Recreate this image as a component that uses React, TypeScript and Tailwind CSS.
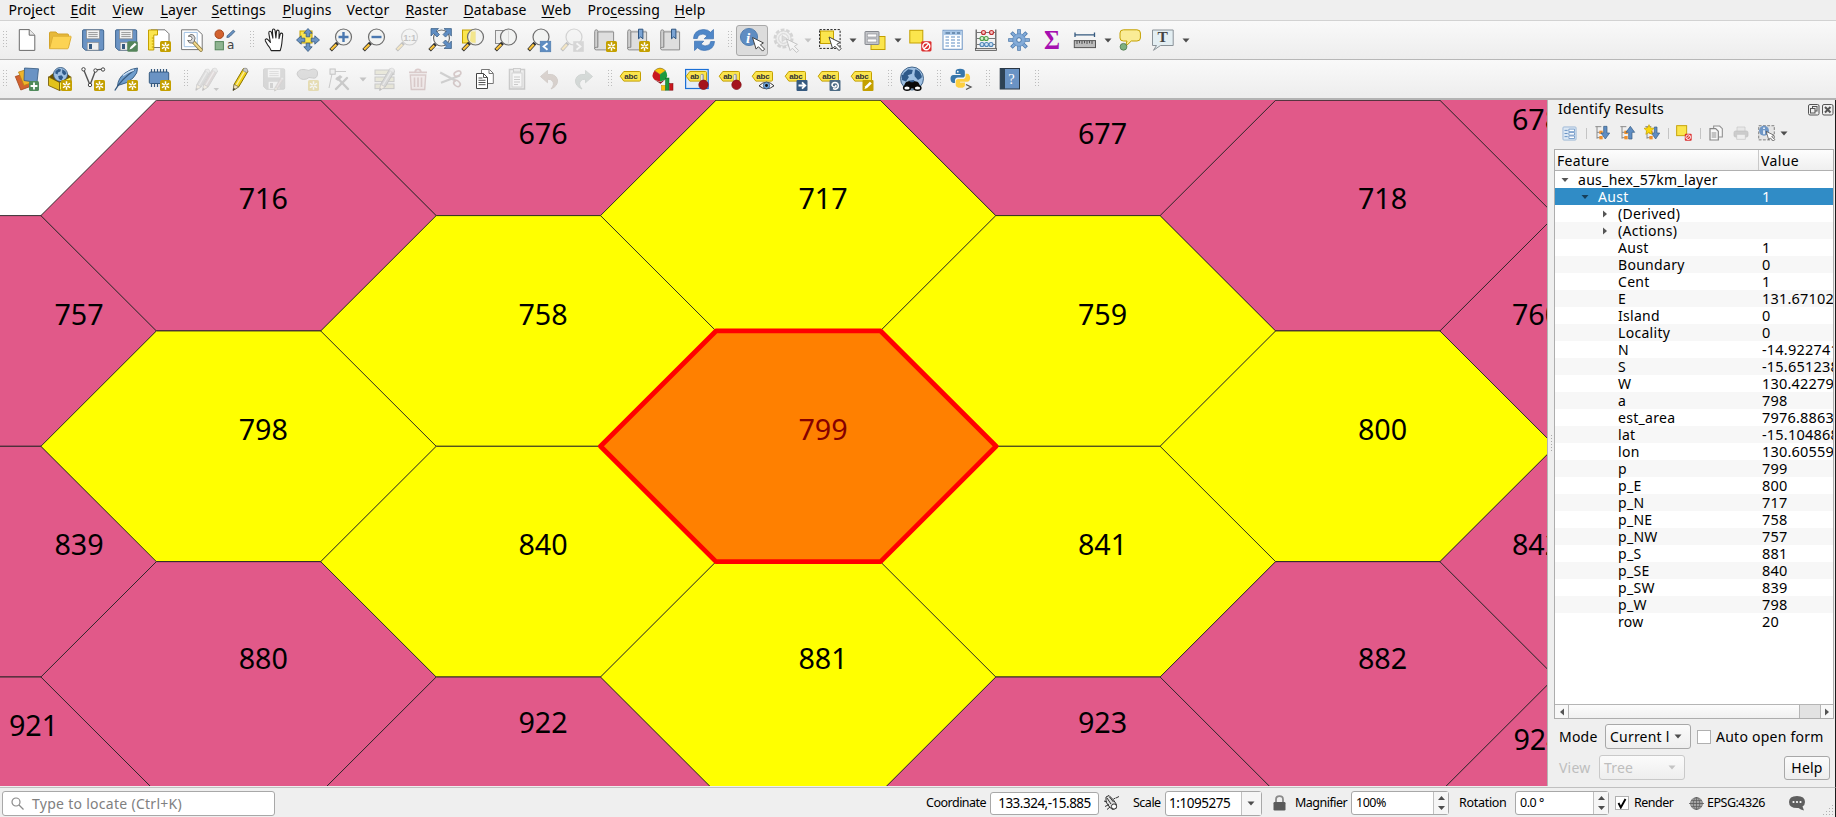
import type { ReactNode } from "react";

/* ---------- icon helpers ---------- */

function Svg({ s = 24, dim = false, children }: { s?: number; dim?: boolean; children: ReactNode }) {
  return (
    <svg width={s} height={s} viewBox="0 0 24 24" className={dim ? "flex-none overflow-visible opacity-25" : "flex-none overflow-visible"} fill="none">
      {children}
    </svg>
  );
}

const Star = () => (
  <g>
    <rect x="13" y="13" width="11" height="11" rx="1.6" fill="#c4a000" />
    <path d="M18.5 14.3v8.4M14.9 16.4l7.2 4.2M22.1 16.4l-7.2 4.2" stroke="#fff" strokeWidth="1.5" />
    <circle cx="18.5" cy="18.5" r="1.1" fill="#c4a000" />
  </g>
);

const Lens = ({ cx = 14.5, cy = 9 }: { cx?: number; cy?: number }) => (
  <g>
    <path d={`M${cx - 6} ${cy + 6}L1.6 22.2`} stroke="#2e2e2e" strokeWidth="3.6" />
    <path d={`M${cx - 7.2} ${cy + 7.4}L2.2 21.6`} stroke="#fcc53c" strokeWidth="2.2" />
    <circle cx={cx} cy={cy} r="8" fill="#f1f3f1" fillOpacity="0.88" stroke="#6e6e6e" strokeWidth="1.2" />
  </g>
);

const Cursor = ({ x = 12, y = 10 }: { x?: number; y?: number }) => (
  <path transform={`translate(${x} ${y})`} d="M0 0l3.6 11.6 2.3-2.4 4.2 4.4 2-2-4.2-4.3 3-1.9z" fill="#fff" stroke="#444" strokeWidth="1" strokeLinejoin="round" />
);

const Pencil = ({ fill = "#f2d21b", dark = "#8a7300" }: { fill?: string; dark?: string }) => (
  <g>
    <path d="M5.2 17.2L14.4 1.6l4.6 2.6-9.3 15.7-5.4 3.4z" fill={fill} stroke={dark} strokeWidth="1" />
    <path d="M7.4 18.2l9-15.4" stroke="#fff" strokeOpacity="0.6" strokeWidth="1.3" />
    <path d="M13.6 3.2l4.3 2.6 1-1.8-1-2.5-2.4-.4z" fill="#c9c9c9" stroke="#777" strokeWidth=".6" />
    <path d="M5.2 17.4l4.4 2.5-5.6 3.6z" fill="#f4e3c0" stroke="#555" strokeWidth=".6" />
    <path d="M4.8 21l1.4.9-2.3 1.6z" fill="#222" />
  </g>
);

const Floppy = ({ grey = false }: { grey?: boolean }) => (
  <g>
    <path d="M2.5 1.8h19q1.2 0 1.2 1.2v18q0 1.2-1.2 1.2H4.5l-2.9-2.6V3q0-1.2.9-1.2z" fill={grey ? "#8a8a8a" : "#6a93c4"} stroke={grey ? "#777" : "#3f658f"} />
    <rect x="5.5" y="2" width="13" height="8.8" fill="#f3f3f3" stroke="#888" strokeWidth=".7" />
    <path d="M7.3 4.6h9.4M7.3 6.6h9.4M7.3 8.6h9.4" stroke="#8d8d8d" strokeWidth=".9" />
    <rect x="6.2" y="14.5" width="11.6" height="7.6" fill="#eee" stroke="#888" strokeWidth=".6" />
    <rect x="8" y="16" width="3" height="5" fill={grey ? "#777" : "#35597f"} />
  </g>
);

const Tag = ({ t = "abc" }: { t?: string }) => (
  <g>
    <path d="M1.2 9.2L4.8 4.5H20.5q1 0 1 1v7.6q0 1-1 1H4.8z" fill="#fbe54d" stroke="#c4a000" strokeWidth="1" />
    <text x="5.2" y="12" fontSize="8" fontWeight="700" fill="#333" fontFamily="'Liberation Sans', sans-serif" textLength={t.length === 3 ? 13.5 : 9}>{t}</text>
  </g>
);

const Pin = () => (
  <g>
    <path d="M17.2 8.500v7" stroke="#9b9b9b" strokeWidth="3.4" strokeLinecap="round" />
    <path d="M16.8 8.500v7" stroke="#eee" strokeWidth="1.4" strokeLinecap="round" />
    <circle cx="18.5" cy="17.8" r="4.700" fill="#a5141c" stroke="#7c0d14" strokeWidth=".7" />
  </g>
);

const MapSheet = () => (
  <g>
    <path d="M5.2 1.9h15v16.5H6" fill="#e4e4e4" />
    <path d="M1.7 3.6q0-1.8 1.6-1.8t1.6 1.8v16H3.3q-1.6 0-1.6 1.4z" fill="#d0d0d0" stroke="#8d8d8d" />
    <path d="M4.9 3.9h15.7v18H3.2q-1.5 0-1.5-1.3t1.5-1.3h1.7z" fill="#dedede" stroke="#8d8d8d" />
  </g>
);

const Bookmark = ({ x = 12.5 }: { x?: number }) => <path d={`M${x} 1.2h4.4v9.6l-2.2-1.9-2.2 1.9z`} fill="#7ba4d4" stroke="#2f5580" />;

const NoEntry = () => (
  <g>
    <rect x="13.2" y="13.2" width="10.3" height="10.3" rx="1.4" fill="#dc2f2f" />
    <circle cx="18.3" cy="18.3" r="3.5" stroke="#fff" strokeWidth="1.4" />
    <path d="M15.9 20.7l4.9-4.9" stroke="#fff" strokeWidth="1.4" />
  </g>
);

const Globe = ({ cx = 12, cy = 8.5, r = 7.5 }: { cx?: number; cy?: number; r?: number }) => (
  <g>
    <circle cx={cx} cy={cy} r={r} fill="#9fc0e2" stroke="#35597f" strokeWidth=".9" />
    <path transform={`translate(${cx - r} ${cy - r}) scale(${r / 7.5})`} d="M2 4l3-2.5 3 .5-.6 2.4-2.6 1-.4 2.2L2 6.5zM9.4 2l3.4 2 1 3-2.4 1.4L9.2 6zM5 9l3.6-.6 1.8 2-2 3.4-2.6-1.6z" fill="#2f5a8a" />
  </g>
);

/* ---------- toolbar icons: main row ---------- */

const mainIcons: Record<string, ReactNode> = {
  new: <Svg><path d="M4.3 1.6h9.9l5.6 5.6v15.2H4.3z" fill="#fff" stroke="#6a6a6a" /><path d="M14.2 1.6v5.6h5.6" fill="#e9e9e9" stroke="#6a6a6a" /></Svg>,
  open: <Svg><path d="M1.5 20.5V5q0-1 1-1h5.4l2 2h9.6q1 0 1 1v3" fill="#e7b93a" stroke="#d3a32a" /><path d="M1.6 20.7L4.6 9q.2-.8 1-.8h16.8q.9 0 .7.9l-2.7 10.8q-.3.9-1.1.9z" fill="#fcd353" stroke="#dfb036" /></Svg>,
  save: <Svg><Floppy /></Svg>,
  saveas: <Svg><Floppy /><rect x="13.2" y="13.2" width="10.6" height="10.6" rx="1.6" fill="#55855b" /><path d="M15.5 21.6l1-2.6 4.4-4.2 1.6 1.6-4.4 4.2z" fill="#fff" /></Svg>,
  layout: <Svg><path d="M4 1.8h14l4 4v13.7H4z" fill="#fff" stroke="#777" /><path d="M1.5 22V2h9v5H6.8v15z" fill="#fbe54d" stroke="#c4a000" /><path d="M4.8 10h2M4.8 13h2M4.8 16h2M4.8 19h2" stroke="#c4a000" /><Star /></Svg>,
  layoutmgr: <Svg><path d="M1.6 1.8h15.6l5 4.6v15.2H1.6z" fill="#fff" stroke="#777" /><path d="M4.2 4.4h13v14.3h-13z" stroke="#9fc0e2" /><path d="M13.5 14l7.5 8" stroke="#8b7a3c" strokeWidth="3.6" strokeLinecap="round" /><path d="M13.5 14l7.5 8" stroke="#f2d78a" strokeWidth="2" strokeLinecap="round" /><path d="M8.2 8.2l3 .2 1 2-1.6 2.4-3-.4Q9 16 12.4 15l1.8-1.4q2.2-4-.8-6.6-2.4-1.7-5.2 1.2z" fill="#dcdcdc" stroke="#666" strokeWidth=".9" /></Svg>,
  style: <Svg><circle cx="6.3" cy="6.2" r="4.3" fill="#d2622f" stroke="#a3451b" /><path d="M13.8 9.4q.2-2.4 2-3l4.4-4.2 1.7 1.3-4.5 4.6q-1.3 1.7-3.6 1.3z" fill="#6a93c4" stroke="#35597f" strokeWidth=".8" /><rect x="2.2" y="13.6" width="8.2" height="8.2" fill="#8fb491" stroke="#55855b" /><text x="14" y="21" fontSize="12" fill="#444" fontFamily="'DejaVu Sans', sans-serif">a</text></Svg>,
  hand: <Svg><path d="M8.2 22.6q-1-3-3.6-5.8L2.4 13q-.6-1.5.6-2 1.2-.4 2.4 1.2l2 2.3L5.8 5.1q-.1-1.6 1.1-1.8 1.2-.1 1.6 1.3l1.4 5.6-.5-7.4Q9.4 1 10.6 1t1.5 1.6l.8 7.3.6-6.5q.3-1.4 1.4-1.3 1.2.2 1.2 1.7L16 10.600l1.200-4.500q.5-1.200 1.500-1 1.100.3 1 1.700l-.9 8.700q-.4 3.600-1.600 7.100z" fill="#fff" stroke="#222" strokeWidth="1.100" strokeLinejoin="round" /></Svg>,
  panto: <Svg><rect x="4" y="3" width="12" height="12" fill="#fbe54d" stroke="#c4a000" /><path d="M12 .5l4.200 4.700h-2.400v3.600h-3.600V5.200H7.800zM12 23.500l-4.200-4.700h2.400v-3.600h3.600v3.600h2.400zM.5 12l4.700-4.200v2.400h3.600v3.600H5.200v2.400zM23.500 12l-4.700 4.200v-2.400h-3.600v-3.600h3.600V7.800z" fill="#6a93c4" stroke="#35597f" strokeWidth=".8" /></Svg>,
  zoomin: <Svg><Lens /><path d="M14.500 4v10M9.500 9h10" stroke="#4a78b0" strokeWidth="2.400" /></Svg>,
  zoomout: <Svg><Lens /><path d="M9.500 9h10" stroke="#4a78b0" strokeWidth="2.400" /></Svg>,
  native: <Svg dim><Lens /><text x="8.200" y="12.500" fontSize="9.500" fontWeight="700" fill="#333" textLength="13" fontFamily="'Liberation Sans', sans-serif">1:1</text></Svg>,
  full: <Svg><rect x="3" y="1" width="20" height="19" fill="#fff" stroke="#c9d6e4" strokeWidth=".5" /><Lens cx={13.500} cy={10} /><path d="M3 .6h7.500L8 3l3.500 3.500-2.500 2.500-3.400-3.500L3 8zM23.400.6v7.500L21 5.600l-3.500 3.500L15 6.500 18.500 3 16 .6zM23.400 20.500H16l2.500-2.400-3.500-3.600 2.500-2.500 3.500 3.500 2.400-2.400z" fill="#5f8dc2" stroke="#35597f" strokeWidth=".7" /></Svg>,
  zoomsel: <Svg><rect x="1.500" y="2" width="13" height="13" fill="#fbe54d" stroke="#c4a000" /><Lens /><path d="M10 3.500h4.500v11.300q-3 .4-5.500-1.800z" fill="#f3e68c" /></Svg>,
  zoomlayer: <Svg><rect x="1.500" y="2.500" width="13" height="13" fill="#eee" stroke="#8d8d8d" /><Lens /><path d="M14.500 3v12" stroke="#d8d8d8" /></Svg>,
  zoomlast: <Svg><Lens cx={14} /><rect x="13.200" y="13.200" width="10.600" height="10.600" fill="#5f8dc2" stroke="#4b78ab" strokeWidth=".6" /><path d="M20.500 15.200l-4 3.300 4 3.300" stroke="#fff" strokeWidth="1.800" /></Svg>,
  zoomnext: <Svg dim><Lens cx={14} /><rect x="13.200" y="13.200" width="10.600" height="10.600" fill="#888" /><path d="M16.500 15.200l4 3.300-4 3.300" stroke="#fff" strokeWidth="1.800" /></Svg>,
  newmap: <Svg><MapSheet /><Star /></Svg>,
  newbm: <Svg><MapSheet /><Bookmark /><Star /></Svg>,
  bm: <Svg><MapSheet /><Bookmark /></Svg>,
  refresh: <Svg><path d="M1.500 10.500Q2 2 11.500 1.500q4.500 0 7 2.700l3-2.700v9.300h-9.300l3-3Q11 4.600 7.300 7q-1.500 1.200-2 3.500z" fill="#4f87c8" stroke="#3a6fb0" strokeWidth=".7" /><path d="M22.500 13.500Q22 22 12.500 22.500q-4.500 0-7-2.700l-3 2.700v-9.300h9.300l-3 3q4.200 3.200 7.900.8 1.500-1.200 2-3.500z" fill="#4f87c8" stroke="#3a6fb0" strokeWidth=".7" /></Svg>,
  identify: <Svg><circle cx="9" cy="9" r="8.600" fill="#5f8dc2" stroke="#4473a8" strokeWidth=".8" /><text x="6" y="14.500" fontSize="15" fontStyle="italic" fontWeight="700" fill="#fff" fontFamily="'Liberation Serif', serif">i</text><Cursor x={12.500} y={9.500} /></Svg>,
  action: <Svg dim><circle cx="10.500" cy="10.500" r="8.500" stroke="#777" strokeWidth="3" strokeDasharray="3.600 1.700" /><circle cx="10.500" cy="10.500" r="7.600" fill="#ddd" stroke="#777" /><circle cx="10.500" cy="10.500" r="4.800" fill="#eee" stroke="#777" /><path d="M9 7.500l5 3-5 3z" fill="#999" stroke="#555" strokeWidth=".6" /><Cursor x={13.500} y={11} /></Svg>,
  select: <Svg><rect x="1.600" y="1.600" width="20.500" height="18.800" stroke="#222" strokeWidth="1" strokeDasharray="2.200 1.400" /><rect x="2.500" y="3" width="13" height="12.500" fill="#fbe54d" stroke="#c4a000" /><Cursor x={11} y={9} /></Svg>,
  selectform: <Svg><rect x="8" y="8.500" width="14" height="13" fill="#fbe54d" stroke="#c4a000" /><rect x="2" y="3.500" width="14" height="13" rx=".5" fill="#c4c6ca" stroke="#85888e" /><rect x="4.200" y="6" width="9.600" height="3" fill="#fff" stroke="#85888e" strokeWidth=".6" /><rect x="4.200" y="11" width="9.600" height="3" fill="#fff" stroke="#85888e" strokeWidth=".6" /></Svg>,
  deselect: <Svg><rect x="1.800" y="2.300" width="13" height="12.700" fill="#fbe54d" stroke="#c4a000" /><NoEntry /></Svg>,
  table: <Svg><rect x="2" y="2.300" width="19.200" height="19" fill="#fff" stroke="#6a93c4" /><rect x="2.500" y="2.800" width="18.200" height="4.300" fill="#a8c6e6" /><path d="M4.500 5h4.500M11 5h3M16 5h3" stroke="#35597f" /><path d="M4.500 9h3.500M10 9h4M16 9h3M4.500 12h3.500M10 12h4M16 12h3M4.500 15h3.500M10 15h4M16 15h3M4.500 18h3.500M10 18h4M16 18h3" stroke="#5f8dc2" /></Svg>,
  abacus: <Svg><path d="M2.200 1.500V21M21.800 1.500V21" stroke="#555" strokeWidth="1.200" /><path d="M2.200 4.500h19.600M2.200 10.500h19.600M2.200 16.500h19.600" stroke="#777" /><rect x="1.500" y="20.500" width="21" height="2" fill="#ddd" stroke="#555" strokeWidth=".8" /><g strokeWidth="1.100"><g fill="#f6c3c3" stroke="#c03030"><circle cx="9.500" cy="4.500" r="2" /><circle cx="17.500" cy="4.500" r="2" /></g><g fill="#d5f0cf" stroke="#4fa04a"><circle cx="8" cy="10.500" r="2" /><circle cx="12.200" cy="10.500" r="2" /></g><g fill="#cfe2f5" stroke="#4f86b8"><circle cx="8" cy="16.500" r="2" /><circle cx="12.500" cy="16.500" r="2" /><circle cx="17" cy="16.500" r="2" /></g></g></Svg>,
  gear: <Svg><path d="M12 1.200v21.600M1.200 12h21.600M4.400 4.400l15.200 15.200M19.600 4.400L4.400 19.600" stroke="#4b78ab" strokeWidth="3.600" /><path d="M12 2v20M2 12h20M5 5l14 14M19 5L5 19" stroke="#83abd8" strokeWidth="2.200" /><circle cx="12" cy="12" r="6.300" fill="#83abd8" stroke="#5b89bd" strokeWidth=".7" /><circle cx="12" cy="12" r="2.300" fill="#f5f5f5" stroke="#4b78ab" /></Svg>,
  sigma: <Svg><text x="4" y="21.300" fontSize="27" fontWeight="700" fill="#a60fb0" textLength="16" lengthAdjust="spacingAndGlyphs" fontFamily="'Liberation Serif', serif">Σ</text></Svg>,
  measure: <Svg><path d="M2 6.800h19.500M2 4.600V9M21.500 4.600V9" stroke="#35597f" strokeWidth="1.300" /><rect x="1.300" y="12.600" width="21.200" height="7" fill="#bcbcbc" stroke="#555" /><path d="M4 13v3M6.500 13v2.300M9 13v3M11.500 13v2.300M14 13v3M16.500 13v2.300M19 13v3" stroke="#444" strokeWidth=".9" /></Svg>,
  tip: <Svg><path d="M5.500 1.800h13.400q3.500 0 3.500 3.200v5q0 3-3.500 3h-5.600L7.500 18.500 9 13H5.500Q2 13 2 10V5q0-3.200 3.500-3.200z" fill="#faec96" stroke="#c4a000" /><circle cx="5.500" cy="18.800" r="3.400" fill="#7fb07f" stroke="#4b734b" strokeWidth=".8" /></Svg>,
  textann: <Svg><path d="M1.500 2h20.700v15.500H9.500L2.500 22.300l3-4.800h-4z" fill="#e3eef2" stroke="#8a9298" /><text x="6.600" y="14.200" fontSize="15.500" fontWeight="700" fill="#444" fontFamily="'Liberation Serif', serif">T</text></Svg>,
};

/* ---------- toolbar icons: data source / digitising row ---------- */

const Layers = () => (
  <g>
    <path d="M.3 9.500l10-3 5 13-9.500 3.500z" fill="#d2622f" stroke="#a3451b" strokeWidth=".8" />
    <path d="M3.500 5l10-3 5 13-9.500 3.500z" fill="#f0b429" stroke="#b98314" strokeWidth=".8" />
    <path d="M9.500 1l14 .8-1.500 13.700-13-2z" fill="#6a93c4" stroke="#35597f" strokeWidth=".8" />
  </g>
);

const editIcons: Record<string, ReactNode> = {
  addlayer: <Svg><Layers /><rect x="14" y="14" width="10" height="10" rx="1.500" fill="#4f8a5b" /><path d="M19 15.600v6.800M15.600 19h6.800" stroke="#fff" strokeWidth="1.800" /></Svg>,
  geopkg: <Svg><path d="M.5 10l11 6 11.500-6-5-4.500h-12z" fill="#6b5200" /><Globe cx={12.500} cy={7.500} r={7} /><path d="M.5 9.800l11 5.700v8L.5 18.500z" fill="#e2c21a" stroke="#6b5200" strokeWidth=".8" /><path d="M11.500 15.500L23 9.800v8.700l-11.500 5z" fill="#fdf250" stroke="#6b5200" strokeWidth=".8" /><Star /></Svg>,
  vlayer: <Svg><path d="M2.500 2.300L9 18 14.500 3.500q3.500-1.600 7-1" stroke="#555" strokeWidth="1.400" /><g fill="#fff" stroke="#444"><circle cx="2.500" cy="2.300" r="1.700" /><circle cx="9" cy="18" r="1.700" /><circle cx="14.500" cy="3.500" r="1.700" /><circle cx="22" cy="2.500" r="1.700" /></g><Star /></Svg>,
  feather: <Svg><path d="M3.500 19Q4 11 11 6q6-4.500 12.500-5 .5 5-4.500 10-5.500 5.500-13.500 7z" fill="#6f9dcc" stroke="#35597f" strokeWidth=".9" /><path d="M.8 23.500Q7 12.500 20.500 3" stroke="#35597f" strokeWidth="1.300" /><path d="M9 8.500q5-4 11-5.500" stroke="#cfe2f5" strokeWidth="1.500" /><Star /></Svg>,
  chip: <Svg><path d="M4.500 2v18M7.500 2v18M10.500 2v18M13.500 2v18M16.500 2v18M19.500 2v18" stroke="#35597f" strokeWidth="1.200" /><rect x="2.300" y="5" width="19.400" height="11.500" rx="1.200" fill="#6a93c4" stroke="#35597f" /><Star /></Svg>,
  edits: <Svg dim><g transform="translate(-4 1) scale(.95)"><Pencil fill="#999" dark="#777" /></g><g transform="translate(2.500 0)"><Pencil fill="#a08888" dark="#777" /></g><path d="M17.500 21h5.500l-2.700 3z" fill="#555" /></Svg>,
  pencil: <Svg><Pencil /></Svg>,
  savee: <Svg dim><Floppy grey /><g transform="translate(10 9.500) scale(.62)"><Pencil fill="#a08888" dark="#777" /></g></Svg>,
  poly: <Svg dim><path d="M2 7q1-5 7-4.500 5 2 9-.5 5 0 4.500 5t-5 4q-4-1.500-6 1-7 2-9.500-5z" fill="#999" stroke="#555" /><Star /></Svg>,
  vertex: <Svg dim><path d="M4.500 4.500L1 21M4.500 4.500H18" stroke="#555" /><rect x="2" y="2" width="5.200" height="5.200" fill="#ddd" stroke="#333" /><path d="M8 22l11-11M9.500 11L20 22" stroke="#555" strokeWidth="2.400" strokeLinecap="round" /><path d="M7 12l5-4 2.500 2-4.500 4z" fill="#555" /></Svg>,
  multi: <Svg dim><g fill="#c9c490" stroke="#555"><rect x="2" y="3" width="19" height="4.600" /><rect x="2" y="10" width="19" height="4.600" /><rect x="2" y="17" width="19" height="4.600" /></g><g transform="translate(2.500 0)"><Pencil fill="#888" dark="#444" /></g></Svg>,
  trash: <Svg dim><path d="M4.300 8h15.400l-1 14.500H5.300z" fill="#e8cfcf" stroke="#8d5252" strokeWidth="1.400" /><path d="M8.500 10.500v9.500M12 10.500v9.500M15.500 10.500v9.500" stroke="#8d5252" strokeWidth="1.600" /><path d="M3 5.300h18M9 5q.5-2.700 3-2.700T15 5" stroke="#8d5252" strokeWidth="1.800" /></Svg>,
  cut: <Svg dim><path d="M1.200 5.500l16 8.500M2 15.800L21 8.500" stroke="#666" strokeWidth="2" /><ellipse cx="18.500" cy="6.600" rx="3.600" ry="2.300" stroke="#7a4a4a" strokeWidth="1.600" transform="rotate(-25 18.500 6.600)" /><ellipse cx="18" cy="16.500" rx="3.600" ry="2.600" stroke="#7a4a4a" strokeWidth="1.600" transform="rotate(40 18 16.500)" /></Svg>,
  copy: <Svg><path d="M9.500 2.500h8l3.800 3.800V16.500H9.500z" fill="#fff" stroke="#777" /><path d="M17 2.500v4h4" stroke="#777" /><path d="M4.500 6.500h7l4 4V21.500h-11z" fill="#fff" stroke="#444" /><path d="M11.500 6.500v4h4M6.500 11h4M6.500 13.300h7M6.500 15.500h7M6.500 17.700h7" stroke="#555" /></Svg>,
  paste: <Svg dim><rect x="4.500" y="2.500" width="15" height="19.500" fill="#ddd" stroke="#555" strokeWidth="1.500" /><rect x="7" y="6" width="10" height="14" fill="#fff" stroke="#777" /><rect x="8.500" y="1.500" width="7" height="3.500" fill="#ccc" stroke="#555" /><path d="M9 10h6M9 12.500h6M9 15h6M9 17.500h4" stroke="#555" /></Svg>,
  undo: <Svg dim><path d="M2.500 9.500L9.500 3.500v4Q18 6.500 19.500 13q.5 6-6.500 9 4-4.500 1.500-8Q13 12 9.500 12.200v3.500z" fill="#8a7060" stroke="#7a6455" /></Svg>,
  redo: <Svg dim><path d="M21.500 9.500L14.500 3.500v4Q6 6.500 4.500 13 4 19 11 22q-4-4.500-1.500-8 1.500-2 5-1.800v3.500z" fill="#7b8f88" stroke="#6d7c76" /></Svg>,
  label: <Svg><Tag /></Svg>,
  pie: <Svg><path d="M8 7.500L2.500 3.700Q8-1.500 13.500 3.700z" fill="#fbc50a" stroke="#5a4a00" strokeWidth=".5" /><path d="M8 7.500L2.500 3.700q-4 5 0 9l5.500 2z" fill="#c8171d" /><path d="M8 7.500l5.500-3.800q3.500 5-.5 9L8 14.700z" fill="#1e9a3e" /><path d="M2.500 12.700l5.500 2.500 5-2.500-4.500 4z" fill="#7d0b10" /><rect x="9.500" y="18.500" width="3.800" height="4.700" fill="#fbc50a" stroke="#b58a00" strokeWidth=".5" /><rect x="13.500" y="11" width="3.500" height="12.200" fill="#1e9a3e" stroke="#0c5f22" strokeWidth=".5" /><rect x="17.500" y="16.500" width="3.500" height="6.700" fill="#c8171d" stroke="#7d0b10" strokeWidth=".5" /></Svg>,
  pinbox: <Svg><rect x=".6" y="2.500" width="22.600" height="19" fill="#e3ecf6" stroke="#1a6fd6" strokeWidth="1.200" /><Tag t="ab" /><Pin /></Svg>,
  pin: <Svg><Tag t="ab" /><Pin /></Svg>,
  eye: <Svg><Tag /><path d="M8 18.800Q15.500 11.500 23 18.800q-7.500 6-15 0z" fill="#fff" stroke="#333" /><circle cx="15.500" cy="18.500" r="3.300" fill="#6fa3d8" stroke="#35597f" strokeWidth=".7" /><circle cx="15.500" cy="18.500" r="1.400" fill="#111" /></Svg>,
  move: <Svg><Tag /><rect x="12.500" y="13" width="11" height="11" rx="1" fill="#35597f" /><path d="M14.500 18.500h6M18 15.300l3.300 3.200-3.300 3.200" stroke="#fff" strokeWidth="1.800" /></Svg>,
  rotate: <Svg><Tag /><rect x="12.500" y="13" width="11" height="11" rx="1" fill="#4d6b85" /><path d="M16 21.500l2 .8q3.500-.8 3.300-3.800-.3-3-3.300-3t-3 2.800q.8 2 2.800 1.600t.6-2" stroke="#fff" strokeWidth="1.500" /></Svg>,
  change: <Svg><Tag /><rect x="12.500" y="13" width="11" height="11" rx="1" fill="#c4a000" /><path d="M14.500 22l.8-2.800 4.600-4.500 1.900 1.900-4.600 4.500z" fill="#fff" /></Svg>,
  meta: <Svg><Globe cx={12} cy={11.500} r={11.500} /><path d="M15.500 2l4 2.500 2.500 5-3.500 1.500-4-3zM1.500 8l4.500-1 3 3-3 4.500-4-1.500z" fill="#2f5a8a" /><path d="M4 19.500q1-5 4-5 1.700-1 2.700.8h2.600q1-1.800 2.700-.8 3 0 4 5l1 2H3z" fill="#0a0a0a" /><ellipse cx="7" cy="21" rx="3.400" ry="2.300" fill="#fff" stroke="#0a0a0a" strokeWidth="1.500" /><ellipse cx="17.500" cy="21" rx="3.400" ry="2.300" fill="#fff" stroke="#0a0a0a" strokeWidth="1.500" /></Svg>,
  python: <Svg><g transform="translate(.8 1) scale(.86)"><path d="M12 1C8.300 1 6.800 2.300 6.800 4v3h5.700v1H4.300C2 8 .8 9.800.8 12.500S2.200 17.300 4 17.300h2v-2.800c0-2 1.500-3.400 3.500-3.400h5.200c1.600 0 2.800-1.100 2.800-2.800V4C17.500 2.200 15.500 1 12 1z" fill="#3776ab" /><path transform="rotate(180 12.200 12)" d="M12 1C8.300 1 6.800 2.300 6.800 4v3h5.700v1H4.300C2 8 .8 9.800.8 12.500S2.200 17.300 4 17.300h2v-2.800c0-2 1.500-3.400 3.500-3.400h5.200c1.600 0 2.800-1.100 2.800-2.800V4C17.500 2.200 15.500 1 12 1z" fill="#fdcf40" /><circle cx="9.300" cy="4.300" r="1" fill="#fff" /></g><path d="M17 17.500l5 2.500-5 2.500" stroke="#555" strokeWidth="1.300" /></Svg>,
  help: <Svg><rect x="2.200" y="1.500" width="19.300" height="20.500" fill="#6a93c4" stroke="#2b3744" strokeWidth="1" /><rect x="2.200" y="1.500" width="4.800" height="20.500" fill="#2e4254" /><text x="10.200" y="16.500" fontSize="14.500" fill="#fff" fontFamily="'Liberation Serif', serif">?</text></Svg>,
};

/* ---------- toolbar primitives ---------- */

function Dots({ cls }: { cls: string }) {
  return (
    <div className={`flex flex-none justify-end ${cls}`}>
      <svg width="5" height="18" viewBox="0 0 5 18">
        {[0, 1, 2, 3, 4, 5].map((r) => (
          <g key={r} fill="#bdbdbd">
            <rect x="0" y={r * 3} width="1" height="1" />
            <rect x="3" y={r * 3} width="1" height="1" />
          </g>
        ))}
      </svg>
    </div>
  );
}

function Caret({ dim = false }: { dim?: boolean }) {
  return (
    <div className="flex w-3 flex-none justify-center">
      <svg width="8" height="5" viewBox="0 0 8 5"><path d="M.5.5h7L4 4.500z" fill={dim ? "#c4c4c4" : "#4d4d4d"} /></svg>
    </div>
  );
}

function Tool({ children, on = false }: { children: ReactNode; on?: boolean }) {
  return (
    <div className="flex h-[38px] w-[33px] flex-none items-center justify-center">
      <div className={on ? "flex h-[31px] w-8 items-center justify-center rounded-[3px] border border-[#a9a9a9] bg-[#dcdcdc]" : "flex items-center justify-center"}>{children}</div>
    </div>
  );
}

function Tools({ set, names }: { set: Record<string, ReactNode>; names: string[] }) {
  return <>{names.map((n) => <Tool key={n} on={n === "identify"}>{set[n]}</Tool>)}</>;
}

const menu: [string, string, string, string][] = [
  ["Pro", "j", "ect", "w-[62px]"],
  ["", "E", "dit", "w-[42px]"],
  ["", "V", "iew", "w-[48px]"],
  ["", "L", "ayer", "w-[51px]"],
  ["", "S", "ettings", "w-[71px]"],
  ["", "P", "lugins", "w-[64px]"],
  ["Vect", "o", "r", "w-[59px]"],
  ["", "R", "aster", "w-[58px]"],
  ["", "D", "atabase", "w-[78px]"],
  ["", "W", "eb", "w-[46px]"],
  ["Pro", "c", "essing", "w-[87px]"],
  ["", "H", "elp", "w-[60px]"],
];

/* ---------- map canvas ---------- */

const CX = 798.3, CY = 346.3, DX = 279.8, HH = 115.35, HW = 197.8, TW = 82.3;
const yellow = new Set(["0,-1", "0,0", "0,1", "-2,0", "2,0", "-1,0", "-1,1", "1,0", "1,1"]);

const labels: [string, number, number][] = [
  ["676", 543, 33.500], ["677", 1102.500, 33.500], ["678", 1536.500, 19.300],
  ["716", 263.300, 99], ["717", 823, 99], ["718", 1382.500, 99],
  ["757", 79, 214.300], ["758", 543, 214.300], ["759", 1102.500, 214.300], ["760", 1536.500, 214.300],
  ["798", 263.300, 330], ["800", 1382.500, 330],
  ["839", 79, 445], ["840", 543, 445], ["841", 1102.500, 445], ["842", 1536.500, 445],
  ["880", 263.300, 559], ["881", 823, 559], ["882", 1382.500, 559],
  ["921", 33.500, 625.300], ["922", 543, 622.500], ["923", 1102.500, 622.500], ["924", 1538, 640],
];

function hex(cx: number, cy: number) {
  return `${cx - HW},${cy} ${cx - TW},${cy - HH} ${cx + TW},${cy - HH} ${cx + HW},${cy} ${cx + TW},${cy + HH} ${cx - TW},${cy + HH}`;
}

function MapCanvas() {
  const cells: ReactNode[] = [];
  for (let i = -3; i <= 3; i++) {
    for (let k = -2; k <= 2; k++) {
      if (i === -3 && k < 0) continue;
      if (i === -2 && k < -1) continue;
      const cy = CY + k * 2 * HH - (i % 2 !== 0 ? HH : 0);
      cells.push(<polygon key={`${i},${k}`} points={hex(CX + i * DX, cy)} fill={yellow.has(`${i},${k}`) ? "#ffff00" : "#e15989"} stroke="#232323" strokeWidth="0.9" />);
    }
  }
  return (
    <svg width="1547" height="686" viewBox="0 0 1547 686" className="block bg-white">
      {cells}
      <polygon points={hex(CX, CY)} fill="#ff8000" stroke="#ff0000" strokeWidth="4.800" strokeLinejoin="round" />
      <g fontFamily="'Noto Sans', sans-serif" fontSize="28.700" textAnchor="middle" fill="#000">
        {labels.map(([t, x, y]) => <text key={t} x={x} y={y + 10.300}>{t}</text>)}
        <text x="823" y="340.300" fill="#850000">799</text>
      </g>
    </svg>
  );
}

/* ---------- identify panel ---------- */

const fields: [string, string][] = [
  ["Aust", "1"], ["Boundary", "0"], ["Cent", "1"], ["E", "131.67102"], ["Island", "0"], ["Locality", "0"],
  ["N", "-14.922741"], ["S", "-15.651238"], ["W", "130.42279"], ["a", "798"], ["est_area", "7976.8863"],
  ["lat", "-15.104868"], ["lon", "130.60559"], ["p", "799"], ["p_E", "800"], ["p_N", "717"], ["p_NE", "758"],
  ["p_NW", "757"], ["p_S", "881"], ["p_SE", "840"], ["p_SW", "839"], ["p_W", "798"], ["row", "20"],
];

function Arrow({ open = false, color = "#555" }: { open?: boolean; color?: string }) {
  return <svg width="8" height="8" viewBox="0 0 8 8" className="flex-none"><path d={open ? "M.5 2h7L4 6z" : "M2 .5v7L6 4z"} fill={color} /></svg>;
}

function Row({ pad, name, value = "", cls, arrow }: { pad: string; name: string; value?: string; cls: string; arrow?: ReactNode }) {
  return (
    <div className={`flex h-[17px] items-center ${cls}`}>
      <div className={`flex w-[207px] flex-none items-center tracking-[0.3px] ${pad}`}>
        <div className="flex w-[17px] flex-none items-center">{arrow}</div>
        <span>{name}</span>
      </div>
      <div className="w-[72px] flex-none overflow-hidden whitespace-nowrap text-[14.500px]">{value}</div>
    </div>
  );
}

const Tree = () => (
  <g>
    <path d="M2 2.500h9M4.500 2.500v18M4.500 11h5M4.500 19h5" stroke="#8a8a8a" strokeWidth="1.500" />
    <rect x="8" y="8.500" width="5" height="5" fill="#f0902a" />
    <rect x="8" y="16.500" width="5" height="5" fill="#f0902a" />
  </g>
);

const Sep = ({ cls }: { cls: string }) => (
  <div className={`flex flex-none justify-center ${cls}`}><div className="h-[11px] w-px bg-[#c4c4c4]" /></div>
);

const P = ({ cls = "w-[25px]", children }: { cls?: string; children: ReactNode }) => <div className={`flex flex-none justify-center ${cls}`}>{children}</div>;

function PanelTools() {
  return (
    <div className="flex h-7 items-center">
      <P cls="w-[30px]"><Svg s={15}><rect x="1.500" y="1.500" width="21" height="21" rx="1.500" fill="#dce8f4" stroke="#9cb8d6" strokeWidth="1.500" /><path d="M4 7h5M4 12h5M4 17h5" stroke="#6a93c4" strokeWidth="1.600" /><path d="M11 5h9v4h-9zM11 10.500h9v4h-9zM11 16h9v4h-9z" fill="#fff" stroke="#6a93c4" strokeWidth="1.300" /></Svg></P>
      <Sep cls="w-[5px]" />
      <P><Svg s={16}><Tree /><path d="M14.500 2h5v10h4L17 21l-6.500-9h4z" fill="#5f8dc2" stroke="#35597f" /></Svg></P>
      <P><Svg s={16}><Tree /><path d="M14.500 21h5V11h4L17 2l-6.500 9h4z" fill="#5f8dc2" stroke="#35597f" /></Svg></P>
      <P><Svg s={16}><Tree /><path d="M15.500 3h4v9h4L17.500 21l-6.500-9h4.500z" fill="#5f8dc2" stroke="#35597f" /><path d="M7.500-.5l2.300 4.900 5.200.6-3.800 3.700 1 5.300-4.700-2.600L2.800 14l1-5.300L0 5l5.200-.6z" fill="#fbd70a" stroke="#c4a000" /></Svg></P>
      <Sep cls="w-[9px]" />
      <P cls="w-[22px]"><Svg s={16}><rect x="1" y="1" width="15" height="15" fill="#fbe54d" stroke="#c4a000" strokeWidth="1.400" /><NoEntry /></Svg></P>
      <Sep cls="w-[11px]" />
      <P cls="w-[20px]"><div className="opacity-50"><Svg s={16}><path d="M8.500 1.500h9l4 4V18h-13z" fill="#fff" stroke="#333" strokeWidth="1.600" /><path d="M3 5.500h8.500l4 4v13H3z" fill="#fff" stroke="#222" strokeWidth="1.800" /><path d="M5.500 12h7M5.500 15h7M5.500 18h7" stroke="#333" strokeWidth="1.500" /></Svg></div></P>
      <P cls="w-[30px]"><div className="opacity-40"><Svg s={16}><path d="M6 3h12v7H6z" fill="#ddd" stroke="#888" /><rect x="1.500" y="9" width="21" height="9" rx="2.500" fill="#999" stroke="#777" /><path d="M5.500 14h13v7.500h-13z" fill="#eee" stroke="#888" /></Svg></div></P>
      <P cls="w-[20px]"><Svg s={17}><rect x="1" y="1" width="22" height="20" stroke="#777" strokeWidth="1.300" strokeDasharray="4 2" fill="#e5e5e5" /><circle cx="8.500" cy="8" r="7" fill="#6f97c6" /><path d="M8.500 7.500V13M8.500 3.500v2" stroke="#fff" strokeWidth="2.200" /><Cursor x={11.500} y={9} /></Svg></P>
      <P cls="w-[15px]"><Caret /></P>
    </div>
  );
}

function Combo({ text, cls, dim = false }: { text: string; cls: string; dim?: boolean }) {
  return (
    <div className={`flex h-[25px] flex-none items-center justify-between overflow-hidden rounded-[3px] border bg-linear-to-b from-[#fbfbfb] to-[#eeeeee] pl-1 pr-1.5 ${dim ? "border-[#c9c9c9] text-[#bebebe]" : "border-[#a8a8a8]"} ${cls}`}>
      <span>{text}</span>
      <Caret dim={dim} />
    </div>
  );
}

function IdentifyPanel() {
  return (
    <div className="flex w-[288px] flex-none border-r border-[#1c1c1c] tracking-[0.2px]">
      <div className="flex w-1.5 flex-none items-center justify-center">
        <svg width="3" height="17" viewBox="0 0 3 17" fill="#aaa">{[0, 3, 6, 9, 12, 15].map((y) => <rect key={y} x="1" y={y} width="1" height="1" />)}</svg>
      </div>
      <div className="flex min-w-0 flex-1 flex-col">
        <div className="flex h-[19px] items-center pl-1">
          <span className="flex-1 pb-[3px] tracking-[0.28px]">Identify Results</span>
          <svg width="12" height="12" viewBox="0 0 12 12" fill="none" stroke="#555" className="mr-0.5"><rect x=".5" y=".5" width="10.500" height="10.500" rx="1.500" /><rect x="4.500" y="2.500" width="4.500" height="4.500" /><rect x="2.500" y="4.500" width="4.500" height="4.500" fill="#efefef" /></svg>
          <svg width="12" height="12" viewBox="0 0 12 12" fill="none" stroke="#555" className="mr-px"><rect x=".5" y=".5" width="10.500" height="10.500" rx="1.500" /><path d="M3 3l5.500 5.500M8.500 3L3 8.500" strokeWidth="2" /></svg>
        </div>
        <PanelTools />
        <div className="mt-[2px] mr-px flex h-[570px] flex-none flex-col border border-[#adadad] bg-white">
          <div className="flex h-[21px] flex-none border-b border-[#b0b0b0] bg-linear-to-b from-[#fdfdfd] to-[#efefef] leading-[22px]">
            <div className="w-[204px] border-r border-[#c9c9c9] pl-0.5 tracking-[0.35px]">Feature</div>
            <div className="pl-0.5 tracking-[0.35px]">Value</div>
          </div>
          <div className="flex-1 overflow-hidden leading-[17px]">
            <Row pad="pl-[6px]" name="aus_hex_57km_layer" cls="bg-white tracking-[0.4px]" arrow={<Arrow open />} />
            <Row pad="pl-[26px]" name="Aust" value="1" cls="bg-[#308cc6] text-white" arrow={<Arrow open color="#173f59" />} />
            <Row pad="pl-[46px]" name="(Derived)" cls="bg-white" arrow={<Arrow />} />
            <Row pad="pl-[46px]" name="(Actions)" cls="bg-[#f7f7f7]" arrow={<Arrow />} />
            {fields.map(([n, v], i) => <Row key={n} pad="pl-[46px]" name={n} value={v} cls={i % 2 ? "bg-[#f7f7f7]" : "bg-white"} />)}
          </div>
          <div className="flex h-[14px] flex-none items-stretch border-t border-[#b5b5b5] bg-[#e2e2e2]">
            <div className="flex w-[14px] flex-none items-center justify-center border-r border-[#b5b5b5] bg-[#f8f8f8]"><div className="rotate-180"><Arrow /></div></div>
            <div className="w-[231px] flex-none border-r border-[#b5b5b5] bg-linear-to-b from-[#fcfcfc] to-[#f0f0f0]" />
            <div className="w-[21px] flex-none border-r border-[#b5b5b5]" />
            <div className="flex flex-1 items-center justify-center bg-[#f8f8f8]"><Arrow /></div>
          </div>
        </div>
        <div className="mt-[5px] flex h-[25px] flex-none items-center pl-[5px] whitespace-nowrap">
          <span className="w-[46px]">Mode</span>
          <Combo text="Current l" cls="w-[86px]" />
          <div className="ml-1.5 h-[14px] w-[14px] flex-none border border-[#b0b0b0] bg-white" />
          <span className="ml-[5px] tracking-[0.25px]">Auto open form</span>
        </div>
        <div className="mt-[6px] flex h-[25px] flex-none items-center pl-[5px]">
          <span className="w-10 text-[#bebebe]">View</span>
          <Combo text="Tree" cls="w-[86px]" dim />
          <div className="flex-1" />
          <div className="mr-[5px] flex h-[24px] w-[46px] items-center justify-center rounded-[3px] border border-[#a8a8a8] bg-linear-to-b from-[#fbfbfb] to-[#eeeeee]">Help</div>
        </div>
      </div>
    </div>
  );
}

/* ---------- status bar ---------- */

function Spin({ text, cls }: { text: string; cls: string }) {
  return (
    <div className={`flex h-6 flex-none items-stretch rounded-[3px] border border-[#a8a8a8] bg-white ${cls}`}>
      <div className="flex flex-1 items-center pl-1">{text}</div>
      <div className="flex w-[15px] flex-none flex-col items-center justify-between border-l border-[#c0c0c0] bg-[#f6f6f6] py-1">
        <svg width="7" height="4" viewBox="0 0 7 4"><path d="M0 4h7L3.500 0z" fill="#4d4d4d" /></svg>
        <svg width="7" height="4" viewBox="0 0 7 4"><path d="M0 0h7L3.500 4z" fill="#4d4d4d" /></svg>
      </div>
    </div>
  );
}

function StatusBar() {
  return (
    <div className="flex h-[30px] items-center border-t border-[#c0c0c0] border-r border-r-[#1c1c1c] pt-px text-[12.500px] tracking-[-0.5px] whitespace-nowrap">
      <div className="ml-[2px] flex h-[25px] w-[273px] flex-none items-center rounded-[3px] border border-[#a8a8a8] bg-white pl-2 text-[14px] tracking-[0.28px] text-[#808080]">
        <svg width="13" height="13" viewBox="0 0 13 13" fill="none" stroke="#8a8a8a" strokeWidth="1.200" className="mr-2"><circle cx="5" cy="5" r="4" /><path d="M8 8l4.500 4.500" /></svg>
        Type to locate (Ctrl+K)
      </div>
      <div className="w-[651px] flex-none" />
      <div className="w-16 flex-none">Coordinate</div>
      <div className="flex h-[23px] w-[109px] flex-none items-center justify-center rounded-[3px] border border-[#a8a8a8] bg-white text-[13.500px] tracking-[-0.5px]">133.324,-15.885</div>
      <div className="flex w-[34px] flex-none pl-[5px]">
        <svg width="16" height="16" viewBox="0 0 16 16" fill="none" stroke="#333"><path d="M2 2l3-1.500L9.500 5l3 4.500v3.500l-4 1.500-3-2.500-3.500-5z" fill="#ddd" /><path d="M3 3l4 6M5.500 2l4 5M0 6l3 1M1 11.500l4-2M3 14.500l3-2.500M9.500 4l2-1M12 3l3-1.500" /><circle cx="10" cy="11.500" r="2.600" fill="#fff" /></svg>
      </div>
      <div className="w-8 flex-none">Scale</div>
      <div className="flex h-[25px] w-[97px] flex-none items-stretch rounded-[3px] border border-[#a8a8a8] bg-white">
        <div className="flex flex-1 items-center pl-[3px] text-[13.500px] tracking-[-0.45px]">1:1095275</div>
        <div className="flex w-5 items-center justify-center border-l border-[#c0c0c0] bg-[#f6f6f6] pr-0.5"><Caret /></div>
      </div>
      <div className="flex w-[33px] flex-none pl-[11px]">
        <svg width="13" height="16" viewBox="0 0 13 16"><path d="M3 8V4.500Q3 1.200 6.500 1.200T10 4.500V8" fill="none" stroke="#8a8a8a" strokeWidth="1.800" /><rect x=".5" y="7" width="12" height="8.500" rx="1.200" fill="#5a5a5a" /></svg>
      </div>
      <div className="w-14 flex-none">Magnifier</div>
      <Spin text="100%" cls="w-[98px]" />
      <div className="ml-2.5 w-14 flex-none tracking-[-0.3px]">Rotation</div>
      <Spin text="0.0 °" cls="w-[94px]" />
      <div className="ml-1.5 flex h-[14px] w-[14px] flex-none items-center justify-center border border-[#b0b0b0] bg-white">
        <svg width="10" height="11" viewBox="0 0 10 11"><path d="M1.500 5l2.300 4.500L8.500 1" fill="none" stroke="#000" strokeWidth="1.900" /></svg>
      </div>
      <div className="ml-[5px] w-[55px] flex-none">Render</div>
      <div className="w-[18px] flex-none">
        <svg width="15" height="15" viewBox="0 0 15 15" fill="none"><circle cx="7.500" cy="7.500" r="6" fill="#a5a5a5" stroke="#777" strokeWidth=".8" /><path d="M0 7.500h15" stroke="#555" strokeWidth=".8" /><path d="M7.500 1v13M2.200 4.500h10.600M2.200 10.500h10.600" stroke="#5a5a5a" strokeWidth=".7" /><ellipse cx="7.500" cy="7.500" rx="3.200" ry="6" stroke="#5a5a5a" strokeWidth=".7" /></svg>
      </div>
      <div className="w-[82px] flex-none">EPSG:4326</div>
      <svg width="16" height="16" viewBox="0 0 16 16" className="flex-none"><path d="M8 1q8 0 8 6 0 3-2.500 4.500l1.500 4Q11.500 14.800 9.500 13 0 13.500 0 7 0 1 8 1z" fill="#5f5f5f" /><g fill="#fff"><circle cx="4.500" cy="7" r="1.100" /><circle cx="8" cy="7" r="1.100" /><circle cx="11.500" cy="7" r="1.100" /></g></svg>
      <div className="flex flex-1 items-end justify-end self-stretch">
        <svg width="12" height="12" viewBox="0 0 12 12" fill="#b0b0b0">{[0, 1, 2, 3].map((r) => [0, 1, 2, 3].filter((c) => c + r >= 3).map((c) => <rect key={`${r}${c}`} x={c * 3} y={r * 3} width="1" height="1" />))}</svg>
      </div>
    </div>
  );
}

export default function App() {
  return (
    <div className="flex h-[817px] w-[1836px] flex-col overflow-hidden bg-[#efefef] font-['Noto_Sans','Open_Sans',sans-serif] text-[14px] text-black">
      <div className="flex h-[21px] flex-none border-b border-[#d2d2d2] pl-[8.500px] leading-5 tracking-[0.12px]">
        {menu.map(([a, b, c, w]) => (
          <div key={a + b + c} className={`flex-none ${w}`}>
            {a}<span className="underline decoration-1 underline-offset-2 [text-decoration-skip-ink:none]">{b}</span>{c}
          </div>
        ))}
      </div>
      <div className="flex h-[39px] flex-none items-center border-b border-[#b7b7b7] bg-linear-to-b from-[#f9f9f9] to-[#ededed]">
        <Dots cls="w-2" /><div className="w-[2.500px] flex-none" />
        <Tools set={mainIcons} names={["new", "open", "save", "saveas", "layout", "layoutmgr", "style"]} />
        <Dots cls="w-[13px]" /><div className="w-1 flex-none" />
        <Tools set={mainIcons} names={["hand", "panto", "zoomin", "zoomout", "native", "full", "zoomsel", "zoomlayer", "zoomlast", "zoomnext", "newmap", "newbm", "bm", "refresh"]} />
        <Dots cls="w-3" /><div className="w-[3px] flex-none" />
        <Tools set={mainIcons} names={["identify", "action"]} /><Caret dim />
        <Tools set={mainIcons} names={["select"]} /><Caret />
        <Tools set={mainIcons} names={["selectform"]} /><Caret />
        <Tools set={mainIcons} names={["deselect", "table", "abacus", "gear", "sigma", "measure"]} /><Caret />
        <Tools set={mainIcons} names={["tip", "textann"]} /><Caret />
      </div>
      <div className="flex h-10 flex-none items-center border-b-2 border-[#b3b3b3] bg-linear-to-b from-[#f9f9f9] to-[#ededed]">
        <Dots cls="w-2" /><div className="w-[2.500px] flex-none" />
        <Tools set={editIcons} names={["addlayer", "geopkg", "vlayer", "feather", "chip"]} />
        <Dots cls="w-[13px]" /><div className="w-[3px] flex-none" />
        <Tools set={editIcons} names={["edits", "pencil", "savee", "poly", "vertex"]} /><Caret dim />
        <Tools set={editIcons} names={["multi", "trash", "cut", "copy", "paste", "undo", "redo"]} />
        <Dots cls="w-[13px]" /><div className="w-[2px] flex-none" />
        <Tools set={editIcons} names={["label", "pie", "pinbox", "pin", "eye", "move", "rotate", "change"]} />
        <Dots cls="w-[14px]" /><div className="w-[3px] flex-none" />
        <Tools set={editIcons} names={["meta"]} />
        <Dots cls="w-[13px]" /><div className="w-[3px] flex-none" />
        <Tools set={editIcons} names={["python"]} />
        <Dots cls="w-[13px]" /><div className="w-[3px] flex-none" />
        <Tools set={editIcons} names={["help"]} />
        <Dots cls="w-[13px]" />
      </div>
      <div className="flex h-[687px] flex-none">
        <div className="h-[686px] w-[1548px] flex-none overflow-hidden border-r border-[#b5b5b5]"><MapCanvas /></div>
        <IdentifyPanel />
      </div>
      <StatusBar />
    </div>
  );
}
